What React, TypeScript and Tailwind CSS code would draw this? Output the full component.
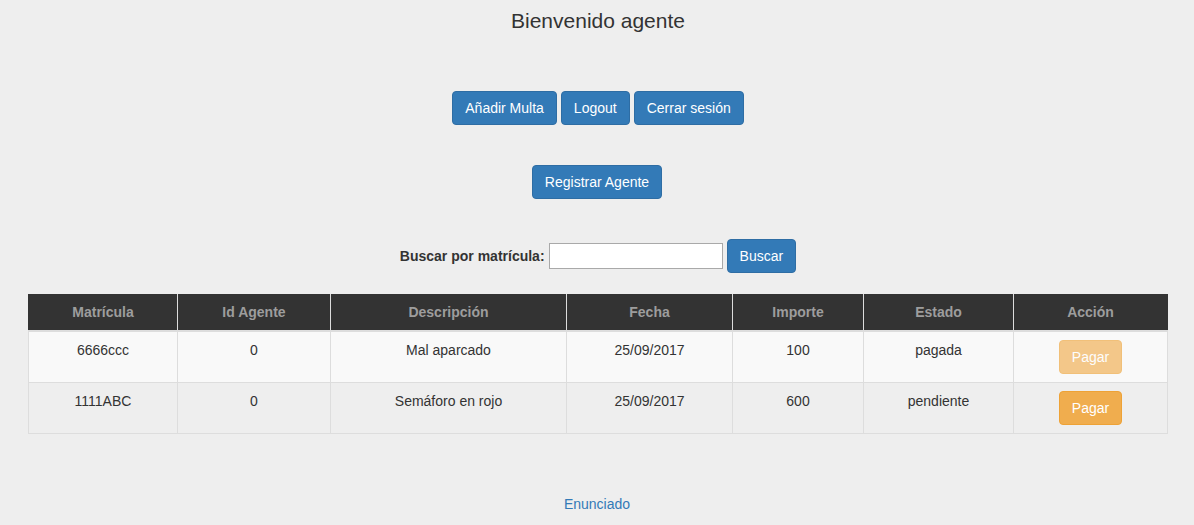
import React from 'react'

type Multa = {
  matricula: string,
  idAgente: number,
  descripcion: string,
  fecha: string,
  importe: number,
  estado: string,
}

const multas: Multa[] = [
  { matricula: '6666ccc', idAgente: 0, descripcion: 'Mal aparcado', fecha: '25/09/2017', importe: 100, estado: 'pagada' },
  { matricula: '1111ABC', idAgente: 0, descripcion: 'Semáforo en rojo', fecha: '25/09/2017', importe: 600, estado: 'pendiente' },
]

const columns = ['Matrícula', 'Id Agente', 'Descripción', 'Fecha', 'Importe', 'Estado', 'Acción']
const widths = ['w-[149px]', 'w-[153px]', 'w-[236px]', 'w-[166px]', 'w-[131px]', 'w-[150px]', 'w-[154px]']

function PrimaryButton({ text }: { text: string }) {
  return (
    <button className="h-[34px] px-3 rounded-[4px] border border-[#2e6da4] bg-[#337ab7] text-white text-[14px] leading-5 hover:bg-[#286090]">
      {text}
    </button>
  )
}

export default function App() {
  return (
    <div className="min-h-[525px] bg-[#eeeeee] text-[#333] text-[14px] font-['Liberation_Sans',Arial,sans-serif] flex flex-col items-center">
      <div className="h-[40px] flex items-center text-[21px] pt-[1px] pl-[2px]">Bienvenido agente</div>

      <div className="mt-[51px] flex gap-1 pl-[2px]">
        <PrimaryButton text="Añadir Multa" />
        <PrimaryButton text="Logout" />
        <PrimaryButton text="Cerrar sesión" />
      </div>

      <div className="mt-[40px]">
        <PrimaryButton text="Registrar Agente" />
      </div>

      <div className="mt-[40px] flex items-center gap-1 pl-[2px]">
        <label className="font-bold">Buscar por matrícula:</label>
        <input className="h-[26px] w-[174px] border border-[#a9a9a9] bg-white px-1 outline-none" />
        <PrimaryButton text="Buscar" />
      </div>

      <table className="mt-[21px] w-[1139px] table-fixed border-collapse text-center self-start ml-[28px]">
        <thead>
          <tr className="bg-[#333333] text-[#9d9d9d]">
            {columns.map((c, i) => (
              <th key={c} className={`${widths[i]} border-x border-b-2 border-[#dddddd] first:border-l-[#333] last:border-r-[#333] py-2 leading-5 font-bold`}>{c}</th>
            ))}
          </tr>
        </thead>
        <tbody>
          {multas.map((m, i) => (
            <tr key={m.matricula} className={i % 2 === 0 ? 'bg-[#f9f9f9]' : 'bg-[#eeeeee]'}>
              <td className="border border-[#dddddd] p-2 leading-5 align-top">{m.matricula}</td>
              <td className="border border-[#dddddd] p-2 leading-5 align-top">{m.idAgente}</td>
              <td className="border border-[#dddddd] p-2 leading-5 align-top">{m.descripcion}</td>
              <td className="border border-[#dddddd] p-2 leading-5 align-top">{m.fecha}</td>
              <td className="border border-[#dddddd] p-2 leading-5 align-top">{m.importe}</td>
              <td className="border border-[#dddddd] p-2 leading-5 align-top">{m.estado}</td>
              <td className="border border-[#dddddd] p-2 leading-5 align-top">
                <button className={`h-[34px] px-3 rounded-[4px] border border-[#eea236] bg-[#f0ad4e] text-white ${m.estado === 'pagada' ? 'opacity-65' : ''}`}>
                  Pagar
                </button>
              </td>
            </tr>
          ))}
        </tbody>
      </table>

      <a href="#" className="mt-[60px] leading-5 text-[#337ab7]">Enunciado</a>
    </div>
  )
}
